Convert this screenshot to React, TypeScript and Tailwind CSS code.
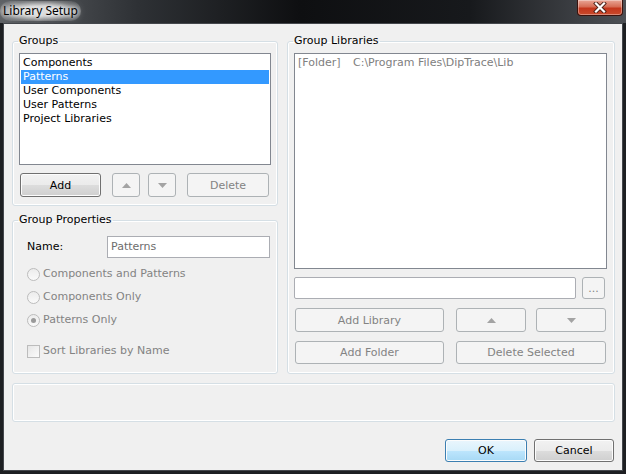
import React from "react";

type Variant = "normal" | "disabled" | "default";

const btnStyles: Record<Variant, string> = {
  normal:
    "border-[#707070] bg-[linear-gradient(#f2f2f2_0%,#ebebeb_50%,#dddddd_50%,#cfcfcf_100%)] shadow-[inset_0_0_0_1px_#fcfcfc] text-black",
  disabled: "border-[#adb2b5] bg-[#f4f4f4] text-[#838383]",
  default:
    "border-[#3c7fb1] bg-[linear-gradient(#eaf6fd_0%,#d9f0fc_50%,#bee6fd_50%,#a7d9f5_100%)] shadow-[inset_0_0_0_1px_#fcfcfc] text-black",
};

function Btn({
  children,
  variant = "disabled",
  className = "",
}: {
  children: React.ReactNode;
  variant?: Variant;
  className?: string;
}) {
  return (
    <button
      type="button"
      className={`flex items-center justify-center rounded-[3px] border leading-none ${btnStyles[variant]} ${className}`}
    >
      {children}
    </button>
  );
}

function Tri({ down = false }: { down?: boolean }) {
  return (
    <svg width="9" height="5" viewBox="0 0 9 5">
      <polygon points={down ? "0,0 9,0 4.5,5" : "0,5 9,5 4.5,0"} fill="#a3a3a3" />
    </svg>
  );
}

function Radio({ checked = false, label }: { checked?: boolean; label: string }) {
  return (
    <div className="flex h-[23px] items-center">
      <span className="flex h-[13px] w-[13px] items-center justify-center rounded-full border border-[#bcbcbc] bg-[linear-gradient(#ececec,#fafafa)]">
        {checked && <span className="h-[5px] w-[5px] rounded-full bg-[#9a9a9a]" />}
      </span>
      <span className="ml-[3px] text-[#838383]">{label}</span>
    </div>
  );
}

export default function App() {
  const groups = ["Components", "Patterns", "User Components", "User Patterns", "Project Libraries"];

  return (
    <div className="flex h-[474px] w-[626px] flex-col bg-[#1d1f22] px-[3px] pb-[3px] font-['DejaVu_Sans',sans-serif] text-[11px] text-black">
      {/* Title bar */}
      <div className="-mx-[3px] flex h-[23px] items-start justify-between bg-[linear-gradient(90deg,#5d6064_0%,#2e3135_22%,#0e0f11_48%,#17191c_75%,#4d5055_100%)]">
        <span className="mt-[1px] rounded-[10px] bg-[radial-gradient(ellipse_at_center,rgba(235,235,235,0.85)_35%,rgba(200,200,200,0.35)_70%,rgba(160,160,160,0)_100%)] px-[3px] py-[2px] font-['Noto_Sans',sans-serif] text-[12px] leading-[16px] text-black [text-shadow:0_0_4px_#fff,0_0_8px_#fff]">
          Library Setup
        </span>
        <div className="mr-[3px] flex h-[16px] w-[46px] items-center justify-center rounded-b-[4px] border border-t-0 border-[#3b120c] bg-[linear-gradient(#e9a696_0%,#d66c55_45%,#c4361c_55%,#c84a2c_100%)] shadow-[inset_0_0_0_1px_rgba(255,255,255,0.35)]">
          <svg width="14" height="11" viewBox="0 0 14 11">
            <path d="M3 1.5 L11 9.5 M11 1.5 L3 9.5" stroke="#4a2018" strokeWidth="4" strokeLinecap="square" />
            <path d="M3 1.5 L11 9.5 M11 1.5 L3 9.5" stroke="#fff" strokeWidth="2.2" strokeLinecap="square" />
          </svg>
        </div>
      </div>

      {/* Client area */}
      <div className="flex flex-1 flex-col border border-[#44474c] bg-[#f0f0f0] pl-[8px] pr-[7px] pt-[10px] pb-[7px]">
        <div className="flex gap-[9px]">
          {/* Left column */}
          <div className="flex w-[266px] flex-col">
            <fieldset className="rounded-[3px] border border-[#d5dfe5] px-[6px] pb-[8px] pt-[5px] shadow-[inset_0_0_0_1px_#fff]">
              <legend className="-ml-[1px] px-[1px] leading-[14px]">Groups</legend>
              <div className="h-[112px] border border-[#828790] bg-white p-[1px] pt-[2px]">
                {groups.map((g) => (
                  <div
                    key={g}
                    className={`h-[14px] px-[2px] leading-[14px] ${g === "Patterns" ? "bg-[#3399ff] text-white" : ""}`}
                  >
                    {g}
                  </div>
                ))}
              </div>
              <div className="mt-[8px] flex h-[24px] items-stretch">
                <Btn variant="normal" className="ml-[1px] w-[81px]">Add</Btn>
                <Btn className="ml-[11px] w-[28px]"><Tri /></Btn>
                <Btn className="ml-[8px] w-[28px]"><Tri down /></Btn>
                <Btn className="ml-[11px] w-[82px]">Delete</Btn>
              </div>
            </fieldset>

            <fieldset className="mt-[7px] flex-1 rounded-[3px] border border-[#d5dfe5] pb-[10px] pl-[14px] pr-[7px] pt-[9px] shadow-[inset_0_0_0_1px_#fff]">
              <legend className="-ml-[9px] px-[1px] leading-[14px]">Group Properties</legend>
              <div className="flex h-[22px] items-center">
                <span className="w-[80px]">Name:</span>
                <div className="flex h-[22px] flex-1 items-center border border-[#abadb3] bg-white px-[3px] text-[#6d6d6d]">
                  Patterns
                </div>
              </div>
              <div className="mt-[5px]">
                <Radio label="Components and Patterns" />
                <Radio label="Components Only" />
                <Radio checked label="Patterns Only" />
              </div>
              <div className="mt-[8px] flex h-[22px] items-center">
                <span className="h-[13px] w-[13px] border border-[#bcbcbc] bg-[linear-gradient(135deg,#e6e6e6,#fbfbfb)]" />
                <span className="ml-[3px] text-[#838383]">Sort Libraries by Name</span>
              </div>
            </fieldset>
          </div>

          {/* Right column */}
          <fieldset className="flex w-[328px] flex-col rounded-[3px] border border-[#d5dfe5] pb-[9px] pl-[6px] pr-[7px] pt-[5px] shadow-[inset_0_0_0_1px_#fff]">
            <legend className="-ml-[1px] px-[1px] leading-[14px]">Group Libraries</legend>
            <div className="h-[216px] border border-[#828790] bg-white p-[1px] pt-[2px]">
              <div className="flex h-[14px] px-[2px] leading-[14px] text-[#808080]">
                <span className="w-[55px]">[Folder]</span>
                <span>C:\Program Files\DipTrace\Lib</span>
              </div>
            </div>
            <div className="mt-[8px] flex h-[22px] gap-[6px]">
              <div className="w-[282px] rounded-[2px] border border-[#abadb3] bg-white" />
              <Btn className="w-[23px] text-[#7a7a7a]">...</Btn>
            </div>
            <div className="mt-[9px] flex h-[24px]">
              <Btn className="ml-[1px] w-[149px]">Add Library</Btn>
              <Btn className="ml-[12px] w-[70px]"><Tri /></Btn>
              <Btn className="ml-[10px] w-[70px]"><Tri down /></Btn>
            </div>
            <div className="mt-[9px] flex h-[23px]">
              <Btn className="ml-[1px] w-[149px]">Add Folder</Btn>
              <Btn className="ml-[12px] w-[150px]">Delete Selected</Btn>
            </div>
          </fieldset>
        </div>

        {/* Status panel */}
        <div className="mt-[9px] h-[39px] rounded-[3px] border border-[#d5dfe5] shadow-[inset_0_0_0_1px_#fff]" />

        {/* Dialog buttons */}
        <div className="mt-[17px] flex h-[23px] justify-end gap-[7px] pr-[1px]">
          <Btn variant="default" className="w-[82px]">OK</Btn>
          <Btn variant="normal" className="w-[80px]">Cancel</Btn>
        </div>
      </div>
    </div>
  );
}
